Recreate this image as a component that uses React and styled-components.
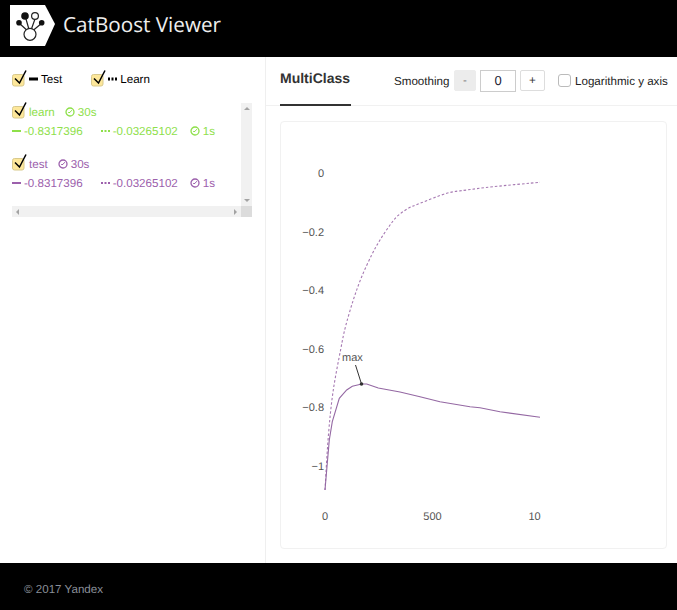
import React from 'react';
import styled, { createGlobalStyle } from 'styled-components';

const GREEN = '#8ee04a';
const PURPLE = '#9c60ac';

const Global = createGlobalStyle`
    html, body { margin: 0; padding: 0; background: #fff; }
    body {
        font-family: "Liberation Sans", Arial, sans-serif;
        font-size: 11.6px;
        color: #000;
        text-rendering: geometricPrecision;
    }
`
const Page = styled.div`
    width: 677px;
    height: 610px;
    display: flex;
    flex-direction: column;
    overflow: hidden;
`
const Header = styled.header`
    height: 57px;
    box-sizing: border-box;
    background: #000;
    display: flex;
    align-items: flex-start;
    padding: 5px 0 0 10px;
    gap: 7px;
`
const Title = styled.div`
    font-family: "Open Sans", sans-serif;
    font-size: 20.7px;
    line-height: 41px;
    color: #eee;
`
const Body = styled.div`
    flex: 1;
    display: flex;
    min-height: 0;
`
const Sidebar = styled.aside`
    flex: none;
    width: 266px;
    box-sizing: border-box;
    border-right: 1px solid #efefef;
    padding: 13px 0 0 12px;
`
const Legend = styled.div`
    display: flex;
    gap: 29px;
    height: 33px;
`
const LegendItem = styled.div`
    display: flex;
    align-items: center;
    height: 18px;
    gap: 2px;
    span { margin-left: 1px; }
`
const ListBox = styled.div`
    width: 240px;
    height: 114px;
    display: grid;
    grid-template-columns: 229px 11px;
    grid-template-rows: 103px 11px;
`
const Entry = styled.div`
    color: ${p => p.$color};
    margin-bottom: 15px;
`
const Row = styled.div`
    display: flex;
    align-items: center;
    height: 18px;
`
const NameRow = styled(Row)`
    margin-bottom: 1px;
    svg:first-child { margin-top: -2px; }
`
const Name = styled.span`
    margin: 0 10px 0 2px;
`
const Value = styled.span`
    display: inline-flex;
    margin-left: ${p => p.$left || 0}px;
`
const Timer = styled.span`
    display: inline-flex;
    align-items: center;
    gap: 3px;
    margin-left: ${p => p.$left || 0}px;
`
const ScrollV = styled.div`
    background: #f1f1f1;
    display: flex;
    flex-direction: column;
    justify-content: space-between;
    align-items: center;
    padding: 4px 0;
`
const ScrollH = styled.div`
    background: #f1f1f1;
    display: flex;
    justify-content: space-between;
    align-items: center;
    padding: 0 4px;
`
const Corner = styled.div`
    background: #dcdcdc;
`
const Arrow = styled.i`
    width: 0;
    height: 0;
    border-style: solid;
    border-color: transparent;
    ${p => p.$dir === 'up' && `border-width: 0 3px 3px; border-bottom-color: #a3a3a3;`}
    ${p => p.$dir === 'down' && `border-width: 3px 3px 0; border-top-color: #a3a3a3;`}
    ${p => p.$dir === 'left' && `border-width: 3px 3px 3px 0; border-right-color: #a3a3a3;`}
    ${p => p.$dir === 'right' && `border-width: 3px 0 3px 3px; border-left-color: #a3a3a3;`}
`
const Main = styled.main`
    flex: 1;
    min-width: 0;
    display: flex;
    flex-direction: column;
`
const Toolbar = styled.div`
    height: 48px;
    border-bottom: 1px solid #f1f1f1;
    display: flex;
    padding-left: 14px;
`
const Tab = styled.div`
    width: 71px;
    height: 49px;
    box-sizing: border-box;
    border-bottom: 2px solid #333;
    font-size: 14px;
    font-weight: bold;
    color: #333;
    padding-top: 13px;
`
const Controls = styled.div`
    display: flex;
    align-items: center;
    height: 21px;
    margin: 13px 0 0 43px;
    color: #222;
`
const Label = styled.span`
    width: ${p => p.$width ? `${p.$width}px` : 'auto'};
    padding-top: 1px;
`
const StepButton = styled.div`
    width: ${p => p.$plain ? 25 : 22}px;
    height: 21px;
    box-sizing: border-box;
    border-radius: 2px;
    margin-left: ${p => p.$left || 0}px;
    background: ${p => p.$plain ? '#fff' : '#ececec'};
    border: 1px solid ${p => p.$plain ? '#ddd' : '#ececec'};
    color: ${p => p.$plain ? '#333' : '#777'};
    display: flex;
    align-items: center;
    justify-content: center;
`
const NumberBox = styled.div`
    width: 36px;
    height: 22px;
    box-sizing: border-box;
    border: 1px solid #ccc;
    margin-left: 4px;
    display: flex;
    align-items: center;
    justify-content: center;
    font-size: 13px;
    color: #223;
`
const Check = styled.div`
    width: 13px;
    height: 13px;
    box-sizing: border-box;
    border: 1px solid #bbb;
    border-radius: 3px;
    margin: 0 4px 0 13px;
`
const Card = styled.div`
    margin: 15px 10px 0 14px;
    height: 428px;
    box-sizing: border-box;
    border: 1px solid #f1f1f1;
    border-radius: 4px;
`
const Footer = styled.footer`
    height: 47px;
    box-sizing: border-box;
    background: #000;
    color: #8a8f99;
    display: flex;
    align-items: center;
    padding: 5px 0 0 24px;
`

function Logo() {
    return (
        <svg width="46" height="42" viewBox="0 0 46 42">
            <polygon points="0,0 35,0 45,19 35,41 0,41" fill="#fff" />
            <g stroke="#222" strokeWidth="1.2" fill="none">
                <path d="M20 28 L9 18 M20 28 L16 14 M20 28 L25 14 M20 28 L32 18" />
                <circle cx="20" cy="29.3" r="6" fill="#fff" />
                <circle cx="25" cy="11" r="3.4" fill="#fff" />
            </g>
            <circle cx="15" cy="11" r="3.8" fill="#111" />
            <circle cx="9" cy="17.7" r="2.8" fill="#111" />
            <circle cx="31.7" cy="17.7" r="2.8" fill="#111" />
        </svg>
    )
}

function CheckMark() {
    return (
        <svg width="15" height="18" viewBox="0 0 15 18" style={{ flex: 'none' }}>
            <rect x="0.5" y="4.5" width="11.5" height="11.5" rx="2" fill="#fde79a" stroke="#d8c98c" />
            <path d="M3 8.5 L7.5 13 L14 0.5" fill="none" stroke="#000" strokeWidth="1.5" />
        </svg>
    )
}

function LineMark({ color, dotted, thick = 2, width = 9 }) {
    return (
        <svg width={width} height="4" viewBox={`0 0 ${width} 4`}>
            <line x1="0" y1="2" x2={width} y2="2" stroke={color} strokeWidth={thick} strokeDasharray={dotted ? '2 1.5' : undefined} />
        </svg>
    )
}

function Clock({ color }) {
    return (
        <svg width="10" height="10" viewBox="0 0 10 10">
            <circle cx="5" cy="5" r="4" fill="none" stroke={color} strokeWidth="1.3" />
            <path d="M4.8 5.5 L6.8 3.2 M5 5.5 L3.2 5.5" stroke={color} strokeWidth="1" fill="none" />
        </svg>
    )
}

function Metric({ name, color }) {
    return (
        <Entry $color={color}>
            <NameRow>
                <CheckMark />
                <Name>{name}</Name>
                <Clock color={color} />
                <Value $left={3}>30s</Value>
            </NameRow>
            <Row>
                <LineMark color={color} />
                <Value $left={3}>-0.8317396</Value>
                <Value $left={18}><LineMark color={color} dotted /></Value>
                <Value $left={3}>-0.03265102</Value>
                <Timer $left={12}><Clock color={color} />1s</Timer>
            </Row>
        </Entry>
    )
}

const solid = 'M325 490 L327.3 463 L329.3 440 L332.3 421.7 L339.3 398.3 L346.7 390 L352.3 386.3 L361.7 384 L366.7 384 L378.3 388 L400 392 L420 396.7 L440 401.7 L470 406.7 L480 407.7 L500 411.7 L540 417.3'
const dashedPoints = [[325, 490], [328.3, 436.7], [333, 392], [340.7, 349.3], [345.5, 326.7], [353.3, 300], [361.7, 276.7], [371.7, 255], [380, 240], [389, 226.5], [397, 216.5], [408, 208.5], [420, 203.3], [446.7, 193.3], [466.7, 190], [493.3, 186.7], [540, 182.3]]
const yTicks = [['0', 177], ['−0.2', 236], ['−0.4', 294], ['−0.6', 353], ['−0.8', 411], ['−1', 470]]
const xTicks = [['0', 325], ['500', 432.5], ['10', 534.5]]

// catmull-rom through the measured points, so the dashes follow a curve
function smoothPath(pts) {
    let d = `M${pts[0][0]} ${pts[0][1]}`
    for (let i = 0; i < pts.length - 1; i++) {
        const a = pts[i - 1] || pts[i]
        const b = pts[i]
        const c = pts[i + 1]
        const e = pts[i + 2] || c
        d += ` C${b[0] + (c[0] - a[0]) / 6} ${b[1] + (c[1] - a[1]) / 6} ${c[0] - (e[0] - b[0]) / 6} ${c[1] - (e[1] - b[1]) / 6} ${c[0]} ${c[1]}`
    }
    return d
}

// x/y here are page coordinates, the card content starts at 281/122
function Chart() {
    return (
        <svg width="385" height="426" viewBox="281 122 385 426" fontFamily="Liberation Sans, sans-serif" fontSize="11" fill="#555">
            {yTicks.map(([t, y]) => <text key={t} x="324" y={y} textAnchor="end">{t}</text>)}
            {xTicks.map(([t, x]) => <text key={t} x={x} y="520" textAnchor="middle">{t}</text>)}
            <path d={smoothPath(dashedPoints)} fill="none" stroke="#a679b2" strokeWidth="1.1" strokeDasharray="2.5 2" />
            <path d={solid} fill="none" stroke="#9468a3" strokeWidth="1.1" />
            <text x="342" y="361">max</text>
            <line x1="355.5" y1="365" x2="361.5" y2="384" stroke="#333" strokeWidth="1" />
            <circle cx="361.5" cy="384" r="1.8" fill="#333" />
        </svg>
    )
}

export default function App() {
    return (
        <Page>
            <Global />
            <Header>
                <Logo />
                <Title>CatBoost Viewer</Title>
            </Header>
            <Body>
                <Sidebar>
                    <Legend>
                        <LegendItem><CheckMark /><LineMark color="#000" thick={3} /><span>Test</span></LegendItem>
                        <LegendItem><CheckMark /><LineMark color="#000" thick={3} dotted /><span>Learn</span></LegendItem>
                    </Legend>
                    <ListBox>
                        <div>
                            <Metric name="learn" color={GREEN} />
                            <Metric name="test" color={PURPLE} />
                        </div>
                        <ScrollV><Arrow $dir="up" /><Arrow $dir="down" /></ScrollV>
                        <ScrollH><Arrow $dir="left" /><Arrow $dir="right" /></ScrollH>
                        <Corner />
                    </ListBox>
                </Sidebar>
                <Main>
                    <Toolbar>
                        <Tab>MultiClass</Tab>
                        <Controls>
                            <Label $width={60}>Smoothing</Label>
                            <StepButton>-</StepButton>
                            <NumberBox>0</NumberBox>
                            <StepButton $plain $left={4}>+</StepButton>
                            <Check />
                            <Label>Logarithmic y axis</Label>
                        </Controls>
                    </Toolbar>
                    <Card><Chart /></Card>
                </Main>
            </Body>
            <Footer>© 2017 Yandex</Footer>
        </Page>
    )
}
